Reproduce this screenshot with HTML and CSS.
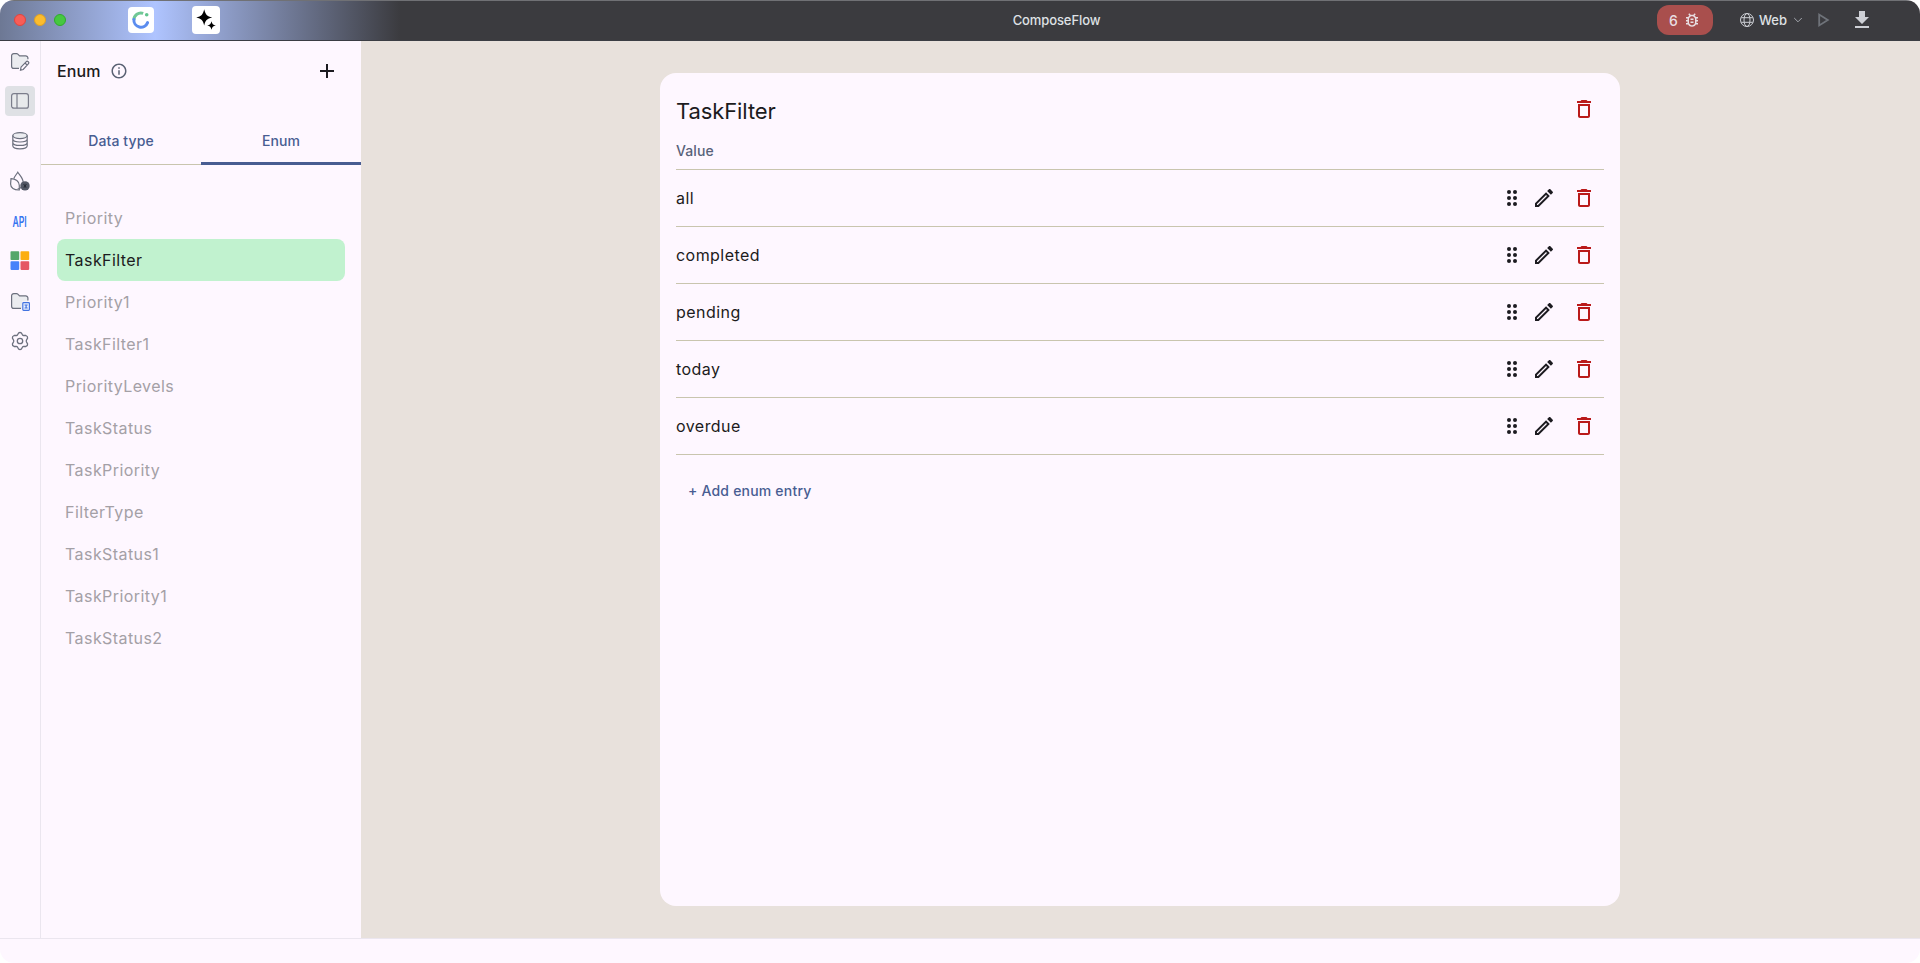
FILE: index.html
```html
<!DOCTYPE html>
<html lang="en">
<head>
<meta charset="utf-8">
<title>ComposeFlow</title>
<link rel="stylesheet" href="styles.css">
</head>
<body>
<svg class="defs" aria-hidden="true">
  <symbol id="trash" viewBox="0 0 24 24"><path d="M6 19c0 1.1.9 2 2 2h8c1.1 0 2-.9 2-2V7H6v12zM8 9h8v10H8V9zm7.5-5l-1-1h-5l-1 1H5v2h14V4z"/></symbol>
  <symbol id="pencil" viewBox="0 0 24 24"><path d="M14.06 9.02l.92.92L5.92 19H5v-.92l9.06-9.06M17.66 3c-.25 0-.51.1-.7.29l-1.83 1.83 3.75 3.75 1.83-1.83c.39-.39.39-1.02 0-1.41l-2.34-2.34c-.2-.2-.45-.29-.71-.29zm-3.6 3.19L3 17.25V21h3.75L17.81 9.94l-3.75-3.75z"/></symbol>
  <symbol id="drag" viewBox="0 0 24 24"><circle cx="9" cy="6" r="2"/><circle cx="15" cy="6" r="2"/><circle cx="9" cy="12" r="2"/><circle cx="15" cy="12" r="2"/><circle cx="9" cy="18" r="2"/><circle cx="15" cy="18" r="2"/></symbol>
</svg>
<div class="window">
  <header class="titlebar">
    <div class="bar-left">
      <div class="lights"><i class="light red"></i><i class="light yellow"></i><i class="light green"></i></div>
      <div class="app-logo">
        <svg width="20" height="20" viewBox="0 0 20 20" fill="none" stroke-width="3"><path d="M2.9 10A7 7 0 0 1 12.2 3.4" stroke="#70c895"/><path d="M2.9 9.4A7.1 7.1 0 0 0 16.6 12.6" stroke="#5b8def" stroke-linecap="round"/><circle cx="15.7" cy="4.7" r="1.8" fill="#62c58e"/></svg>
      </div>
      <div class="ai-logo">
        <svg width="28" height="28" viewBox="0 0 28 28"><path d="M12.2 3.2C13.4 8.500 14.900 10.200 20.200 11.400C14.900 12.600 13.400 14.300 12.200 19.600C11 14.300 9.500 12.600 4.200 11.400C9.500 10.200 11 8.500 12.200 3.200ZM19.500 15.200C20.200 18 21 18.800 23.800 19.500C21 20.200 20.200 21 19.500 23.800C18.800 21 18 20.200 15.200 19.500C18 18.800 18.800 18 19.500 15.200Z"/></svg>
      </div>
    </div>
    <div class="bar-title">ComposeFlow</div>
    <div class="bar-right">
      <div class="issues"><span>6</span>
        <svg width="18" height="18" viewBox="0 0 24 24" fill="#e8dfe2"><path d="M20 8h-2.81c-.45-.78-1.07-1.45-1.82-1.96L17 4.41 15.59 3l-2.17 2.17C12.96 5.06 12.49 5 12 5s-.96.06-1.41.17L8.41 3 7 4.41l1.62 1.63C7.88 6.55 7.26 7.22 6.81 8H4v2h2.09c-.05.33-.09.66-.09 1v1H4v2h2v1c0 .34.04.67.09 1H4v2h2.81c1.04 1.79 2.97 3 5.19 3s4.15-1.21 5.19-3H20v-2h-2.09c.05-.33.09-.66.09-1v-1h2v-2h-2v-1c0-.34-.04-.67-.09-1H20V8zm-4 4v3c0 .22-.03.47-.07.7l-.1.65-.37.65c-.72 1.24-2.04 2-3.46 2s-2.74-.77-3.46-2l-.37-.64-.1-.65C8.03 15.48 8 15.23 8 15v-4c0-.23.03-.48.07-.7l.1-.65.37-.65c.3-.52.72-.97 1.21-1.31l.57-.39.74-.18c.31-.08.63-.12.94-.12.32 0 .63.04.95.12l.68.16.61.42c.5.34.91.78 1.21 1.31l.38.65.1.65c.04.22.07.47.07.69v1zm-6 2h4v2h-4zm0-4h4v2h-4z"/></svg>
      </div>
      <div class="target">
        <svg width="16" height="16" viewBox="0 0 16 16" fill="none" stroke="#ced0d6"><circle cx="8" cy="8" r="6.5"/><ellipse cx="8" cy="8" rx="3" ry="6.5"/><path d="M2.2 5.7h11.6M2.2 10.3h11.6"/></svg>
        <span>Web</span>
        <svg class="chevron" width="10" height="8" viewBox="0 0 10 8" fill="none" stroke="#a4a7ae"><path d="M1.2 2L5 5.8 8.8 2"/></svg>
      </div>
      <svg class="play" width="14" height="16" viewBox="0 0 14 16" fill="none" stroke="#6f737a" stroke-width="1.8"><path d="M2.2 2.6v10.8L10.8 8z"/></svg>
      <svg class="download" width="24" height="24" viewBox="0 0 24 24" fill="#ced0d6"><path d="M19 9h-4V3H9v6H5l7 7 7-7zM5 18v2h14v-2H5z"/></svg>
    </div>
  </header>
  <div class="workspace">
    <nav class="rail">
      <div class="rail-item"><svg class="low" width="20" height="20" viewBox="0 0 20 20" fill="none" stroke="#6c707e" stroke-width="1.2"><path d="M9 16.4H3.800A2.200 2.200 0 0 1 1.600 14.200V3.800A2.200 2.200 0 0 1 3.800 1.600h2.800c.5 0 .9.200 1.200.500l1.800 1.800h6a2.200 2.200 0 0 1 2.300 2.200v1.200" fill="#ebecf0"/><path d="M11 15.200l5.100-5.400a1.500 1.500 0 0 1 2.200 2.100l-5.100 5.600-2.700.7zM15 11l2.100 2" fill="#fef7ff"/></svg></div>
      <div class="rail-item selected"><svg width="20" height="20" viewBox="0 0 20 20" fill="none" stroke="#7b7d8b" stroke-width="1.2"><rect x="1.6" y="2.6" width="16.8" height="14.6" rx="2.3" fill="#e8eaec"/><path d="M7 2.6v14.6"/></svg></div>
      <div class="rail-item"><svg width="20" height="20" viewBox="0 0 20 20" fill="none" stroke="#6c707e" stroke-width="1.2"><ellipse cx="10" cy="4.6" rx="7.2" ry="3" fill="#ebecf0"/><path d="M2.8 4.6v10.2c0 1.7 3.2 3 7.2 3s7.2-1.3 7.2-3V4.6M2.8 8c0 1.7 3.2 3 7.2 3s7.2-1.3 7.2-3M2.8 11.4c0 1.7 3.2 3 7.2 3s7.2-1.3 7.2-3"/></svg></div>
      <div class="rail-item"><svg width="20" height="20" viewBox="0 0 20 20" fill="none" stroke="#6c707e" stroke-width="1.2"><path d="M3.800 7.600C5 4.800 6.700 3 7.800 1.200C9.500 4 13.200 7 13.200 11.500C13.200 15 10.500 18 7.500 18"/><path d="M1 7.600C5.500 7.700 9.300 10.500 9.300 14.200V19C4 19.200.6 17 .6 13z"/><circle cx="15" cy="14.900" r="4.700" fill="#545866" stroke="none"/><path d="M13.500 13.400l3 3m0-3l-3 3M15 12.800v4.200" stroke="#252833" stroke-width=".9"/></svg></div>
      <div class="rail-item api"><span>API</span></div>
      <div class="rail-item"><svg class="tiles" width="20" height="20" viewBox="0 0 20 20"><rect x=".5" y=".3" width="8.700" height="8.700" rx=".8" fill="#55a76a"/><rect x="10.500" y=".3" width="8.700" height="8.700" rx=".8" fill="#fcae10"/><rect x=".5" y="10.200" width="8.700" height="8.700" rx=".8" fill="#4682fa"/><rect x="10.500" y="10.200" width="8.700" height="8.700" rx=".8" fill="#e55765"/></svg></div>
      <div class="rail-item"><svg class="low" width="20" height="20" viewBox="0 0 20 20" fill="none" stroke="#6c707e" stroke-width="1.2"><path d="M11 16.400H3.800A2.200 2.200 0 0 1 1.600 14.200V3.800A2.200 2.200 0 0 1 3.800 1.600h2.800c.5 0 .9.200 1.200.500l1.800 1.800h6a2.200 2.200 0 0 1 2.300 2.200V9.500H12v6.900z" fill="#ebecf0" stroke="none"/><path d="M11 16.400H3.800A2.200 2.200 0 0 1 1.600 14.200V3.800A2.200 2.200 0 0 1 3.800 1.600h2.800c.5 0 .9.200 1.200.500l1.800 1.800h6a2.200 2.200 0 0 1 2.300 2.200V8.500"/><rect x="12.800" y="10.600" width="6.600" height="7.800" rx=".8" fill="#eef3ff" stroke="#4273e0"/><path d="M14.500 13h3.200M14.500 16h3.200M16.100 13v3" stroke="#4273e0"/></svg></div>
      <div class="rail-item"><svg width="20" height="20" viewBox="0 0 20 20" fill="none" stroke="#6c707e" stroke-width="1.300"><path d="M8.500 2.100Q10 .9 11.500 2.100L12.700 4.200Q13 4.500 13.500 4.500L15.900 4.500Q17.800 5.200 17.600 7L16.400 9.300Q16.200 10 16.400 10.700L17.600 13Q17.800 14.800 15.900 15.500L13.500 15.500Q13 15.500 12.700 15.800L11.500 17.900Q10 19.100 8.500 17.900L7.300 15.800Q7 15.500 6.500 15.500L4.100 15.500Q2.200 14.800 2.400 13L3.600 10.700Q3.800 10 3.600 9.300L2.400 7Q2.200 5.200 4.100 4.500L6.500 4.500Q7 4.500 7.300 4.200Z"/><circle cx="10" cy="10" r="2.700"/></svg></div>
    </nav>
    <aside class="panel">
      <div class="panel-head">
        <h1>Enum</h1>
        <svg class="info" width="18" height="18" viewBox="0 0 24 24" fill="#5a6274"><path d="M11 7h2v2h-2zm0 4h2v6h-2zm1-9C6.480 2 2 6.480 2 12s4.480 10 10 10 10-4.480 10-10S17.520 2 12 2zm0 18c-4.410 0-8-3.590-8-8s3.590-8 8-8 8 3.590 8 8-3.590 8-8 8z"/></svg>
        <svg class="plus" width="24" height="24" viewBox="0 0 24 24" fill="#1c1b20"><path d="M19 13h-6v6h-2v-6H5v-2h6V5h2v6h6v2z"/></svg>
      </div>
      <div class="tabs"><div class="tab">Data type</div><div class="tab active">Enum</div></div>
      <ul class="enum-list">
        <li>Priority</li><li class="current">TaskFilter</li><li>Priority1</li><li>TaskFilter1</li><li>PriorityLevels</li><li>TaskStatus</li><li>TaskPriority</li><li>FilterType</li><li>TaskStatus1</li><li>TaskPriority1</li><li>TaskStatus2</li>
      </ul>
    </aside>
    <main class="canvas">
      <section class="card">
        <div class="card-head"><h2>TaskFilter</h2><svg class="icon del"><use href="#trash"/></svg></div>
        <div class="column-head">Value</div>
        <div class="entry"><span>all</span><svg class="icon"><use href="#drag"/></svg><svg class="icon edit"><use href="#pencil"/></svg><svg class="icon del"><use href="#trash"/></svg></div>
        <div class="entry"><span>completed</span><svg class="icon"><use href="#drag"/></svg><svg class="icon edit"><use href="#pencil"/></svg><svg class="icon del"><use href="#trash"/></svg></div>
        <div class="entry"><span>pending</span><svg class="icon"><use href="#drag"/></svg><svg class="icon edit"><use href="#pencil"/></svg><svg class="icon del"><use href="#trash"/></svg></div>
        <div class="entry"><span>today</span><svg class="icon"><use href="#drag"/></svg><svg class="icon edit"><use href="#pencil"/></svg><svg class="icon del"><use href="#trash"/></svg></div>
        <div class="entry"><span>overdue</span><svg class="icon"><use href="#drag"/></svg><svg class="icon edit"><use href="#pencil"/></svg><svg class="icon del"><use href="#trash"/></svg></div>
        <div class="add-entry">+ Add enum entry</div>
      </section>
    </main>
  </div>
  <footer class="statusbar"></footer>
</div>
</body>
</html>
```
FILE: styles.css
```css
* { box-sizing: border-box; }
body { margin: 0; background: #fff; font-family: Inter, "Liberation Sans", sans-serif; color: #1c1b20; }
h1, h2, ul { margin: 0; padding: 0; font-weight: inherit; }
svg { display: block; flex: none; }
.defs { position: absolute; width: 0; height: 0; }
.window { display: flex; flex-direction: column; height: 963px; border-radius: 14px; overflow: hidden; background: #fef7ff; }

.titlebar { display: grid; grid-template-columns: 1fr auto 1fr; align-items: center; height: 41px; padding-bottom: 1px; border-top: 1px solid #707175; border-bottom: 1px solid #3b3d44; background: linear-gradient(90deg, #6d7894 0, #afc4ff 155px, #3b3b3f 400px); }
.bar-left { display: flex; align-items: center; }
.lights { display: flex; gap: 8px; padding-left: 14px; }
.light { width: 12px; height: 12px; border-radius: 50%; border: 1px solid; }
.red { background: #f85d57; border-color: #e0443e; }
.yellow { background: #fbbc2e; border-color: #dea123; }
.green { background: #46c840; border-color: #30ac2a; }
.app-logo { display: grid; place-items: center; width: 26px; height: 26px; margin-left: 62px; border-radius: 4px; background: #fff; }
.ai-logo { width: 28px; height: 28px; margin-left: 38px; border-radius: 4px; background: #fff; }
.bar-title { font-size: 13px; font-weight: 500; color: #dfe1e5; letter-spacing: -.1px; padding-left: 193px; }
.bar-right { display: flex; align-items: center; justify-content: flex-end; padding-right: 46px; color: #dfe1e5; }
.issues { display: flex; align-items: center; justify-content: space-between; width: 56px; height: 30px; padding: 0 12px; border-radius: 12px; background: #a94f4d; font-size: 14px; font-weight: 500; color: #e8dfe2; }
.target { display: flex; align-items: center; margin-left: 26px; font-size: 13px; font-weight: 500; }
.target span { margin-left: 4px; }
.chevron { margin-left: 6px; }
.play { margin-left: 14px; }
.download { margin-left: 19px; }

.workspace { display: flex; flex: 1; min-height: 0; }
.rail { display: flex; flex-direction: column; gap: 10px; width: 41px; padding: 5px 0 0 5px; border-right: 1px solid #ebe6ef; }
.rail-item { display: grid; place-items: center; width: 30px; height: 30px; border-radius: 4px; }
.selected { background: #dfe1e5; }
.api span { font-size: 14px; font-weight: 600; color: #3574f0; transform: scaleX(.62); }
.low { margin-top: 2px; }
.tiles { margin-right: 1px; }

.panel { width: 320px; background: #fef7ff; }
.panel-head { display: flex; align-items: center; height: 60px; padding: 0 22px 0 16px; }
.panel-head h1 { font-size: 16px; font-weight: 500; letter-spacing: .1px; }
.info { margin-left: 9px; }
.plus { margin-left: auto; }
.tabs { display: flex; height: 48px; margin-top: 16px; border-bottom: 1px solid #c9c5ae; font-size: 14px; font-weight: 500; letter-spacing: .1px; color: #485d92; }
.tab { flex: 1; height: 48px; line-height: 48px; text-align: center; }
.active { border-bottom: 3px solid #485d92; }
.enum-list { margin-top: 32px; padding: 0 16px; list-style: none; font-size: 16px; letter-spacing: .43px; color: #a4a0a6; }
.enum-list li { height: 42px; line-height: 42px; padding-left: 8px; border-radius: 8px; }
.enum-list .current { background: #c1f2cf; color: #1c1b20; }

.canvas { display: flex; flex: 1; padding: 32px 0 32px 299px; background: #e8e1dc; }
.card { width: 960px; padding: 16px; border-radius: 16px; background: #fef7ff; }
.card-head { display: flex; justify-content: space-between; height: 44px; padding: 8px 8px 0 0; }
.card-head h2 { font-size: 22px; line-height: 28px; letter-spacing: -.1px; }
.icon { width: 24px; height: 24px; fill: #1c1b20; }
.del { fill: #ba1a1a; }
.column-head { height: 37px; padding-top: 8px; border-bottom: 1px solid #c9c5ae; font-size: 14px; line-height: 20px; font-weight: 500; letter-spacing: .1px; color: #58627a; }
.entry { display: flex; align-items: center; height: 57px; padding-right: 8px; border-bottom: 1px solid #c9c5ae; font-size: 16px; letter-spacing: .45px; }
.entry span { flex: 1; }
.edit { margin: 0 16px 0 8px; }
.add-entry { padding: 26px 12px 0; font-size: 14px; line-height: 20px; font-weight: 500; letter-spacing: .2px; color: #485d92; }
.statusbar { height: 25px; border-top: 1px solid #ebe6ef; }
```
